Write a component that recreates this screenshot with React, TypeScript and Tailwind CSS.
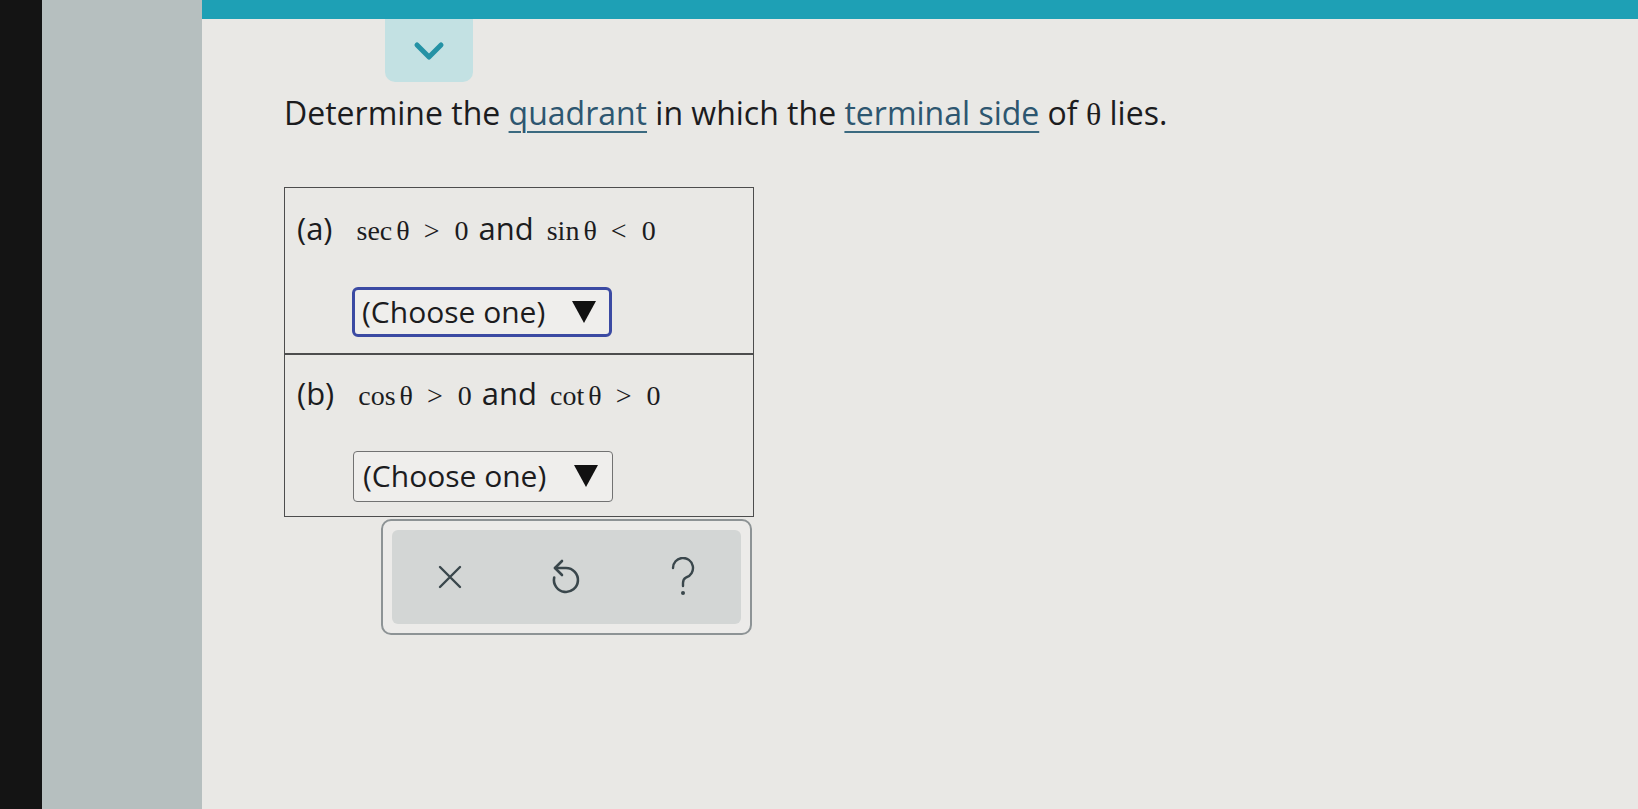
import React from "react";

const Theta = () => <span className="font-['Liberation_Serif',serif]">θ</span>;

function Dropdown({ focused }: { focused?: boolean }) {
  return (
    <div
      className={
        focused
          ? "flex h-[50px] w-[260px] items-center justify-between rounded-[6px] border-[3px] border-[#3b4aa3] bg-[#efeeec] pl-[7px] pr-[13px]"
          : "flex h-[51px] w-[260px] items-center justify-between rounded-[4px] border-[1.5px] border-[#727272] bg-[#efeeec] pl-[9px] pr-[14px]"
      }
    >
      <span className="text-[30px] leading-none text-[#1c1c1e]">(Choose one)</span>
      <svg width="24" height="22" viewBox="0 0 24 22">
        <polygon points="0,0 24,0 12,22" fill="#111" />
      </svg>
    </div>
  );
}

// one "fn θ rel 0" chunk in serif math type
function Cond({ fn, rel }: { fn: string; rel: string }) {
  return (
    <span className="flex items-baseline font-['Liberation_Serif',serif] text-[28px]">
      <span>{fn}</span>
      <span className="ml-[4px]">θ</span>
      <span className="ml-[14px]">{rel}</span>
      <span className="ml-[15px]">0</span>
    </span>
  );
}

function Row({ label, a, rel1, b, rel2, focused, tall }: {
  label: string; a: string; rel1: string; b: string; rel2: string; focused?: boolean; tall?: boolean;
}) {
  return (
    <div className={tall ? "flex h-[165px] flex-col px-[12px]" : "flex h-[161px] flex-col px-[12px]"}>
      <div className={tall ? "mt-[20px] flex h-[40px] items-baseline text-[31px] leading-[40px] text-[#1c1c1e]" : "mt-[18px] flex h-[40px] items-baseline text-[31px] leading-[40px] text-[#1c1c1e]"}>
        <span className="mr-[24px]">{label}</span>
        <Cond fn={a} rel={rel1} />
        <span className="ml-[10px] mr-[13px]">and</span>
        <Cond fn={b} rel={rel2} />
      </div>
      <div className={tall ? "ml-[55px] mt-[39px]" : "ml-[56px] mt-[38px]"}>
        <Dropdown focused={focused} />
      </div>
    </div>
  );
}

export default function App() {
  return (
    <div className="flex h-[809px] w-[1638px] overflow-hidden bg-[#e9e8e5] font-['Open_Sans',sans-serif]">
      <div className="w-[42px] bg-[#141414]" />
      <div className="w-[160px] bg-[#b6bfbf]" />
      <div className="flex flex-1 flex-col">
        <div className="h-[19px] bg-[#1ea0b5]" />
        <div className="flex flex-col pl-[82px]">
          <div className="ml-[101px] flex h-[63px] w-[88px] items-center justify-center rounded-b-[10px] bg-[#c3e1e3]">
            <svg width="32" height="22" viewBox="0 0 32 22">
              <path d="M4 5 L16 17 L28 5" fill="none" stroke="#2492a5" strokeWidth="5" strokeLinecap="round" strokeLinejoin="round" />
            </svg>
          </div>

          <p className="mt-[11px] h-[40px] text-[32px] leading-[40px] text-[#1c1c1e]">
            Determine the{" "}
            <span className="text-[#2d5670] underline decoration-[#3b6a80] decoration-2 underline-offset-[6px]">quadrant</span>{" "}
            in which the{" "}
            <span className="text-[#2d5670] underline decoration-[#3b6a80] decoration-2 underline-offset-[6px]">terminal side</span>{" "}
            of <Theta /> lies.
          </p>

          <div className="mt-[54px] w-[470px] border-[1.5px] border-[#4d4d4d]">
            <Row label="(a)" a="sec" rel1=">" b="sin" rel2="<" focused tall />
            <div className="h-[1.5px] bg-[#4d4d4d]" />
            <Row label="(b)" a="cos" rel1=">" b="cot" rel2=">" />
          </div>

          <div className="ml-[97px] mt-[2px] w-[371px] rounded-[10px] border-2 border-[#8d9395] bg-[#ecebe9] px-[9px] py-[9px]">
            <div className="flex h-[94px] items-center rounded-[6px] bg-[#d3d6d5]">
              <div className="flex flex-1 justify-center">
                <svg width="24" height="24" viewBox="0 0 24 24">
                  <path d="M2 2 L22 22 M22 2 L2 22" stroke="#3a474c" strokeWidth="2.4" strokeLinecap="round" />
                </svg>
              </div>
              <div className="flex flex-1 justify-center">
                <svg width="32" height="38" viewBox="12 13 32 38">
                  <path d="M17 23 H28 A12 12 0 1 1 16.2 32.5" fill="none" stroke="#3a474c" strokeWidth="2.6" strokeLinecap="round" strokeLinejoin="round" />
                  <path d="M24 16 L17 23 L24 30" fill="none" stroke="#3a474c" strokeWidth="2.6" strokeLinecap="round" strokeLinejoin="round" />
                </svg>
              </div>
              <div className="flex flex-1 justify-center">
                <svg width="26" height="40" viewBox="0 0 26 40">
                  <path d="M3 11 A10 10 0 1 1 16 20.5 C13.5 21.8 13 23.5 13 26 V29" fill="none" stroke="#3a474c" strokeWidth="2.4" strokeLinecap="round" />
                  <circle cx="13" cy="36" r="2" fill="#3a474c" />
                </svg>
              </div>
            </div>
          </div>
        </div>
      </div>
    </div>
  );
}
